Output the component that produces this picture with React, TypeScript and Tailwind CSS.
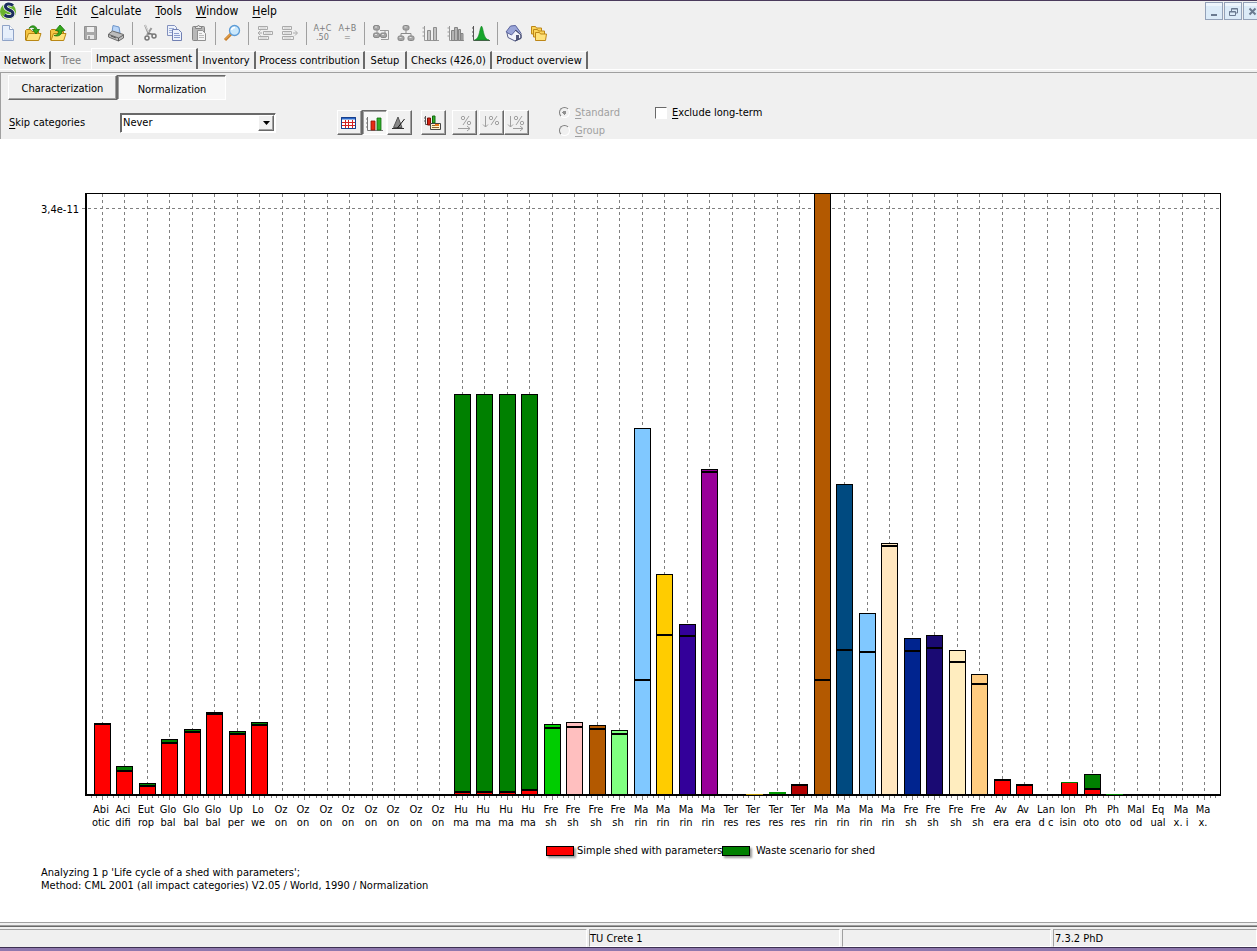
import React from "react";

type Bar = { lines: [string, string]; top?: number; mid?: number; low?: string; high?: string; flat?: string };

const RED = "#ff0000";
const GREEN = "#008000";
const solid = (a: string, b: string, color: string, top: number, mid: number): Bar => ({ lines: [a, b], top, mid, low: color, high: color });
const shed = (a: string, b: string, top: number, mid: number): Bar => ({ lines: [a, b], top, mid, low: RED, high: GREEN });
const empty = (a: string, b: string): Bar => ({ lines: [a, b] });

const BARS: Bar[] = [
  shed("Abi", "otic", 723, 723),
  shed("Aci", "difi", 766, 770),
  shed("Eut", "rop", 783, 785),
  shed("Glo", "bal", 739, 742),
  shed("Glo", "bal", 729, 731),
  shed("Glo", "bal", 712, 713),
  shed("Up", "per", 731, 733),
  shed("Lo", "we", 722, 724),
  ...Array.from({ length: 8 }, () => empty("Oz", "on")),
  shed("Hu", "ma", 394, 791),
  shed("Hu", "ma", 394, 791),
  shed("Hu", "ma", 394, 791),
  shed("Hu", "ma", 394, 789),
  solid("Fre", "sh", "#00cc00", 724, 727),
  solid("Fre", "sh", "#ffbfbf", 722, 726),
  solid("Fre", "sh", "#b35900", 725, 728),
  solid("Fre", "sh", "#80ff80", 730, 733),
  solid("Ma", "rin", "#80c8ff", 428, 679),
  solid("Ma", "rin", "#ffcc00", 574, 634),
  solid("Ma", "rin", "#330099", 624, 635),
  solid("Ma", "rin", "#990099", 469, 471),
  empty("Ter", "res"),
  { lines: ["Ter", "res"], top: 794, flat: "#b38f00" },
  { lines: ["Ter", "res"], top: 792, flat: "#009900" },
  solid("Ter", "res", "#b30000", 784, 784),
  solid("Ma", "rin", "#b35900", 193, 679),
  solid("Ma", "rin", "#004a80", 484, 649),
  solid("Ma", "rin", "#80c8ff", 613, 651),
  solid("Ma", "rin", "#ffe6bf", 543, 545),
  solid("Fre", "sh", "#00248f", 638, 650),
  solid("Fre", "sh", "#1a0a73", 635, 647),
  solid("Fre", "sh", "#ffedbf", 650, 661),
  solid("Fre", "sh", "#ffcc80", 674, 683),
  shed("Av", "era", 779, 779),
  shed("Av", "era", 784, 784),
  empty("Lan", "d c"),
  { lines: ["Ion", "isin"], top: 782, low: RED, flat: GREEN },
  shed("Ph", "oto", 774, 788),
  { lines: ["Ph", "oto"], top: 794, flat: GREEN },
  empty("Mal", "od"),
  empty("Eq", "ual"),
  empty("Ma", "x. i"),
  empty("Ma", "x."),
];

const BASE = 794;
const center = (i: number) => Math.floor(102 + 22.5 * i);

function BarShape({ bar, x }: { bar: Bar; x: number }) {
  if (bar.top === undefined) return null;
  if (bar.flat) {
    return (
      <g>
        {bar.low && <rect x={x} y={bar.top} width="17" height={BASE - bar.top} fill="#000" />}
        {bar.low && <rect x={x + 1} y={bar.top + 1} width="15" height={BASE - bar.top - 1} fill={bar.low} />}
        <rect x={x} y={bar.top} width="17" height={bar.low || bar.top === BASE ? 1 : 2} fill={bar.flat} />
      </g>
    );
  }
  const mid = bar.mid ?? bar.top;
  return (
    <g>
      <rect x={x} y={bar.top} width="17" height={BASE - bar.top} fill="#000" />
      {mid > bar.top + 1 && <rect x={x + 1} y={bar.top + 1} width="15" height={mid - bar.top - 1} fill={bar.high} />}
      <rect x={x + 1} y={mid + 2} width="15" height={BASE - mid - 2} fill={bar.low} />
    </g>
  );
}

function Chart() {
  return (
    <svg viewBox="0 139 1257 696" className="block w-full" role="img" aria-label="Normalization by impact category">
      <g shapeRendering="crispEdges">
        {BARS.map((_, i) => (
          <line key={i} x1={center(i) + 0.5} x2={center(i) + 0.5} y1="194" y2="794" stroke="#808080" strokeDasharray="3 3" />
        ))}
        <line x1="82" x2="1220" y1="208.5" y2="208.5" stroke="#808080" strokeDasharray="3 3" />
        <rect x="85" y="193" width="1136" height="1" />
        <rect x="1220" y="193" width="1" height="603" />
        {BARS.map((bar, i) => (
          <BarShape key={i} bar={bar} x={center(i) - 8} />
        ))}
        <rect x="85" y="193" width="2" height="603" />
        <rect x="85" y="794" width="1136" height="2" />
        {BARS.map((bar, i) =>
          bar.flat && bar.top === BASE ? <rect key={i} x={center(i) - 8} y="794" width="17" height="1" fill={bar.flat} /> : null
        )}
        {BARS.map((_, i) => (
          <g key={i} fill="#808080">
            <rect x={center(i)} y="796" width="1" height="4" />
            {(i === BARS.length - 1 ? [-11, -6, 6, 11] : [-11, -6, 5]).map((d) => (
              <rect key={d} x={center(i) + d} y="796" width="1" height="2" />
            ))}
          </g>
        ))}
      </g>
      <g fontSize="11" textAnchor="middle">
        {BARS.map((bar, i) => (
          <text key={i}>
            <tspan x={center(i) - 1} y="813">{bar.lines[0]}</tspan>
            <tspan x={center(i) - 1} y="826">{bar.lines[1]}</tspan>
          </text>
        ))}
      </g>
      <text x="79" y="213" fontSize="11" textAnchor="end">3,4e-11</text>
    </svg>
  );
}

function Svg({ children }: { children: React.ReactNode }) {
  return <svg width="18" height="18" viewBox="0 0 18 18" fill="none" className="shrink-0">{children}</svg>;
}

const folder = (
  <>
    <path d="M1.500 16V6.500l1-1h4l1.500 2h6.500V16z" fill="#f4c542" stroke="#b07d10" />
    <path d="M2 16.500 4.500 9.500h12.500l-2.300 7z" fill="#ffe27a" stroke="#b98714" />
  </>
);
const node = (x: number, y: number) => (
  <g key={`${x}-${y}`}>
    <rect x={x} y={y} width="6" height="4.500" rx="1.600" fill="#a6a6a6" stroke="#868686" />
    <path d={`M${x + 1.5} ${y + 1.5}h2`} stroke="#e2e2e2" />
  </g>
);

const ICONS: Record<string, React.ReactNode> = {
  New: <><path d="M3.500 1.500h7l4 4v11h-11z" fill="#e6effb" stroke="#8fa3c7" /><path d="M10.500 1.500v4h4" fill="#fff" stroke="#8fa3c7" /><path d="M5 15h8" stroke="#c9d9f2" strokeWidth="2" /></>,
  Open: <>{folder}<path d="M5 4.500c2-4 7-3.500 8 1h2.500L12 10 8.500 5.500H11C10 3 7.500 2.500 5 4.500z" fill="#35a81c" stroke="#167509" strokeWidth=".8" /></>,
  "Save to project": <>{folder}<path d="M5 11.500c4-.5 4.500-2 4.500-5H6.500L11 1l5 5.500h-3c0 4-3 6.500-8 5z" fill="#35a81c" stroke="#167509" strokeWidth=".8" /></>,
  Save: <><path d="M2.500 2.500h12v13h-12z" fill="#a8a8a8" stroke="#909090" /><path d="M5 3h7v5H5z" fill="#efefef" /><path d="M5 11h7v4H5z" fill="#e6e6e6" /><path d="M7 12v3" stroke="#888" strokeWidth="1.500" /></>,
  Print: <><path d="m5 8 1-6.500 6 1.500 1 6z" fill="#b9d5f8" stroke="#6c94c9" /><path d="m1.500 10 4-3 11 3.500v3.500l-5 3-10-4z" fill="#bcbcbc" stroke="#6d6d6d" /><path d="m2 10.500 9.500 3.500 5-3" stroke="#666" /><path d="m11.500 14v3M4 12l5 2" stroke="#555" /></>,
  Cut: <><path d="m5 1 4 10M11.500 4 7 11" stroke="#999" strokeWidth="2" /><path d="m5 1 4 8" stroke="#e2e2e2" /><circle cx="7" cy="14" r="2" stroke="#777" strokeWidth="1.500" /><circle cx="14" cy="12" r="2" stroke="#777" strokeWidth="1.500" /><path d="m8 9 5 1.500" stroke="#777" strokeWidth="1.500" /></>,
  Copy: <><path d="M2.500 1.500h7l2 2v8h-9z" fill="#edf2fc" stroke="#8290bd" /><path d="M4 4.500h5M4 6.500h4M4 8.500h3" stroke="#9eafd8" /><path d="M7.500 5.500h6l3 3v8h-9z" fill="#edf2fc" stroke="#7180b3" /><path d="M9 9.500h5M9 11.500h6M9 13.500h6" stroke="#8b9cce" /></>,
  Paste: <><rect x="2.500" y="2.500" width="12" height="14" rx="1" fill="#b8b8b8" stroke="#858585" /><path d="M5.500 4.500v-2h2L8.500 1l1 1.500h2v2z" fill="#e5e5e5" stroke="#858585" /><path d="M7.500 6.500h5l3 3v7h-8z" fill="#f4f4f4" stroke="#909090" /><path d="M9 9.500h3M9 11.500h5M9 13.500h5" stroke="#bbb" /></>,
  Find: <><path d="m8 10-6 6" stroke="#c67b28" strokeWidth="3" /><path d="m8 9.500-6 6" stroke="#efb45e" /><circle cx="11.500" cy="6.500" r="5" fill="#cae8fc" stroke="#5c9bd6" strokeWidth="1.300" /><path d="M8.500 6c.5-2 2-2.500 3.500-2.500" stroke="#fff" strokeWidth="1.500" /></>,
  Outdent: <><path d="M2.500 2.500h9v3h-9zM7.500 7.500h9v3h-9zM2.500 12.500h10v3h-10zM2 9h4M4.500 6.500 2 9l2.500 2.500" stroke="#aaa" /><path d="M4 4h6M9 9h6M4 14h7" stroke="#ccc" /></>,
  Indent: <><path d="M1.500 2.500h9v3h-9zM1.500 7.500h9v3h-9zM1.500 12.500h11v3h-11zM12 9h4M14 6.500 16.500 9 14 11.500" stroke="#aaa" /><path d="M3 4h6M3 9h6M3 14h7" stroke="#ccc" /></>,
  "Network view": <><path d="M5 5v6h8V7M8 6.500h8.500v9H9" stroke="#999" />{node(1.5, 1.5)}{node(1.5, 9)}{node(8.5, 9)}</>,
  "Tree view": <><path d="M9 6v3M4 12V9.500h10V12" stroke="#8a8a8a" />{node(6, 1.5)}{node(1, 12)}{node(11, 12)}</>,
  Analyze: <><path d="M2.500 2v14.500H17M.5 4h2M.5 8h2M.5 12h2" stroke="#999" /><path d="M5.500 6.500h3v10h-3zM11.500 3.500h3v13h-3z" fill="#c4c4c4" stroke="#8d8d8d" /></>,
  Compare: <><path d="M2.500 2v14.500H17M.5 4h2M.5 8h2M.5 12h2" stroke="#999" /><path d="M4.500 6.500h3v10h-3zM7.500 3.500h3v13h-3zM11.500 5.500h2v11h-2zM14 9.500h2v7h-2z" fill="#b4b4b4" stroke="#858585" /></>,
  Uncertainty: <><path d="M1.500 2v14.500H18M0 4h2M0 8h2M0 12h2" stroke="#555" /><path d="M2.500 16c4-1 4.500-6 6-12l1-2 1 2c1.500 6 2 11 6.500 12z" fill="#16a52b" stroke="#108521" strokeWidth=".6" /></>,
  Home: <><path d="m2 9 7.500-6L16 9v5.500l-6 2.500-7-3.500z" fill="#f2f4fb" stroke="#565d87" /><path d="m1 8 4.500-6 5-.5 5 7-1 1L11 6l-4.500 5z" fill="#9aa5d8" stroke="#5a639c" /><path d="M11 11h3v4.500l-3 1z" fill="#53587b" /><path d="m10 6 6 5v3l-6 3" stroke="#444b6e" /></>,
  Folders: <><path d="M1.500 10V2.500h4l1 1.500h5v6z" fill="#fbd55a" stroke="#bd8617" /><path d="M3.500 13V5.500h4l1 1.500h6v6z" fill="#fbd55a" stroke="#bd8617" /><path d="M5.500 16.500v-8h4l1 1.500h6l-1 6.500z" fill="#ffe27a" stroke="#bd8617" /></>,
};

function Calc({ a, b }: { a: string; b: string }) {
  return (
    <span className="flex flex-col items-center text-[9px] leading-[9px] text-[#7d7d7d]">
      <span>{a}</span>
      <span>{b}</span>
    </span>
  );
}

const TOOL_GROUPS: string[][] = [
  ["New", "Open", "Save to project"],
  ["Save", "Print"],
  ["Cut", "Copy", "Paste"],
  ["Find"],
  ["Outdent", "Indent"],
  ["A+C|.50", "A+B|="],
  ["Network view", "Tree view", "Analyze", "Compare", "Uncertainty"],
  ["Home", "Folders"],
];

const MENUS = ["File", "Edit", "Calculate", "Tools", "Window", "Help"];

const TABS: { name: string; width: string }[] = [
  { name: "Network", width: "w-[51px]" },
  { name: "Tree", width: "w-[40px]" },
  { name: "Impact assessment", width: "w-[107px]" },
  { name: "Inventory", width: "w-[58px]" },
  { name: "Process contribution", width: "w-[109px]" },
  { name: "Setup", width: "w-[42px]" },
  { name: "Checks (426,0)", width: "w-[85px]" },
  { name: "Product overview", width: "w-[96px]" },
];

const RAISED = "border border-t-white border-l-white border-r-[#696969] border-b-[#696969] shadow-[inset_-1px_-1px_0_#a0a0a0]";
const SUNKEN = "border border-t-[#696969] border-l-[#696969] border-r-white border-b-white bg-[#f7f7f7] shadow-[inset_1px_1px_0_#a0a0a0]";

function ViewButton({ label, pressed, children }: { label: string; pressed?: boolean; children: React.ReactNode }) {
  return (
    <button aria-label={label} className={`flex h-[25px] w-[25px] items-center justify-center ${pressed ? SUNKEN + " pt-px pl-px" : RAISED + " pr-px"}`}>
      <Svg>{children}</Svg>
    </button>
  );
}

function Percent({ x }: { x: number }) {
  return (
    <g stroke="#a0a0a0">
      <circle cx={x + 2} cy="4" r="1.700" />
      <circle cx={x + 8} cy="9" r="1.700" />
      <path d={`M${x + 8} 2 ${x + 2} 11`} />
    </g>
  );
}

function Mnemonic({ text }: { text: string }) {
  return <><span className="underline underline-offset-2">{text[0]}</span>{text.slice(1)}</>;
}

export default function App() {
  return (
    <div className="flex min-h-screen flex-col overflow-hidden border-t border-[#4a3b5c] bg-[#f0f0f0] font-['DejaVu_Sans_Condensed','DejaVu_Sans',sans-serif] text-[11px] leading-[13px] text-black">
      <header>
        <div className="flex h-5 items-center overflow-hidden">
          <svg width="18" height="18" viewBox="0 0 18 18" className="shrink-0">
            <circle cx="8" cy="9.500" r="8" fill="#69b32d" />
            <path d="M1 11c3 6 10 7 14-1-1 9-11 10-14 1z" fill="#b6dc62" />
            <path d="M13 3.500C10 1 5.500 1.500 5.500 4.500c0 4 7.500 3 7.500 7 0 3.500-5 4-8.500 1.500" stroke="#fff" strokeWidth="4.500" fill="none" />
            <path d="M13 3.500C10 1 5.500 1.500 5.500 4.500c0 4 7.500 3 7.500 7 0 3.500-5 4-8.500 1.500" stroke="#1b2d5e" strokeWidth="3" fill="none" />
          </svg>
          <nav className="flex gap-[14px] pl-[6px] text-[12px] leading-[14px]">
            {MENUS.map((m) => (
              <button key={m}><Mnemonic text={m} /></button>
            ))}
          </nav>
          <div className="-mr-1 ml-auto flex gap-px">
            {[
              ["Minimize", <path key="p" d="M5 12h6" stroke="#6b7a90" strokeWidth="2" />],
              ["Restore", <path key="p" d="M6.500 8V5.500h6v4.500h-2M4.500 8.500h6v4h-6zM4.500 9h6M6.500 6h6" stroke="#6b7a90" />],
              ["Close", <path key="p" d="m5.500 5.500 6 6m0-6-6 6" stroke="#6b7a90" strokeWidth="2" />],
            ].map(([label, icon]) => (
              <button key={label as string} aria-label={label as string} className="h-[18px] w-[18px] border border-[#93a1b8] bg-[#dcebf8] shadow-[inset_0_3px_0_#edf5fc]">
                <svg width="16" height="16" viewBox="0 0 16 16" fill="none">{icon}</svg>
              </button>
            ))}
          </div>
        </div>

        <div className="flex h-6 items-center">
          {TOOL_GROUPS.map((group, g) => (
            <div key={g} className="flex items-center">
              {g > 0 && <span className="mr-[3px] ml-[4px] h-[23px] w-px bg-[#a0a0a0]" />}
              {group.map((name) => (
                <button key={name} aria-label={name.replace("|", " ")} className={`flex h-6 items-center justify-center ${name === "New" ? "w-5 pr-1" : "w-[25px]"}`}>
                  {name.includes("|") ? <Calc a={name.split("|")[0]} b={name.split("|")[1]} /> : <Svg>{ICONS[name]}</Svg>}
                </button>
              ))}
            </div>
          ))}
        </div>

        <div role="tablist" className="flex h-[25px] items-end border-b border-white">
          {TABS.map((t) => {
            const active = t.name === "Impact assessment";
            return (
              <button
                key={t.name}
                role="tab"
                aria-selected={active}
                disabled={t.name === "Tree"}
                className={`${t.width} shrink-0 border-t border-t-white whitespace-nowrap disabled:text-[#808080] ${
                  active ? "h-[21px] border-l border-l-white pb-[2px]" : "h-[18px]"
                } ${t.name === "Tree" ? "" : "border-r-2 border-r-[#696969]"}`}
              >
                {t.name}
              </button>
            );
          })}
        </div>
      </header>

      <section className="mt-[2px] border-t border-l border-[#a0a0a0]">
        <div className="flex pt-[2px] pl-[7px]">
          <button className={`h-[25px] w-[109px] pt-px ${RAISED}`}>Characterization</button>
          <button className={`h-[25px] w-[109px] pt-[3px] pl-px ${SUNKEN}`}>Normalization</button>
        </div>
        <div className="flex h-[39px] items-center pt-[6px]">
          <label htmlFor="skip" className="w-[119px] pl-2"><Mnemonic text="Skip categories" /></label>
          <div className="relative">
            <select id="skip" className="block h-[20px] w-[156px] appearance-none border border-t-[#696969] border-r-white border-b-white border-l-[#696969] bg-white pl-[2px] shadow-[inset_1px_1px_0_#696969]">
              <option>Never</option>
            </select>
            <span className={`pointer-events-none absolute top-[2px] right-[2px] flex h-4 w-4 items-center justify-center bg-[#f0f0f0] ${RAISED}`}>
              <svg width="7" height="4" viewBox="0 0 7 4"><path d="M0 0h7L3.500 4z" /></svg>
            </span>
          </div>
          <div className="ml-[61px] flex">
            <ViewButton label="Table">
              <path d="M1.500 3.500h14v11h-14z" fill="#fff" stroke="#173f8c" />
              <path d="M2 4.500h13" stroke="#2c68c8" strokeWidth="2" />
              <path d="M2 8.500h13M2 11.500h13M5.500 6v8M8.500 6v8M12.500 6v8" stroke="#d32222" />
              <path d="M1.500 3.500h14v11h-14z" stroke="#173f8c" />
            </ViewButton>
            <ViewButton label="Graph" pressed>
              <path d="M1.500 3v13.500H17M0 5h2M0 9h2M0 13h2" stroke="#777" />
              <path d="M5 7h4v9H5z" fill="#e62c14" stroke="#8e1405" strokeWidth=".8" /><path d="M11 4h4v12h-4z" fill="#2fb02a" stroke="#12690f" strokeWidth=".8" />
            </ViewButton>
            <ViewButton label="Uncertainty">
              <path d="m8 3-4.500 10.500h8.500z" fill="#888" stroke="#555" /><path d="m14.500 5-7 9" stroke="#111" /><path d="M2 14.500h12" stroke="#333" />
            </ViewButton>
          </div>
          <div className="ml-[9px] flex">
            <ViewButton label="Graph options">
              <path d="M1.500 2v8.500h5M0 4h2M0 7h2" stroke="#555" />
              <path d="M3.500 4h3v7h-3z" fill="#d32211" stroke="#7d0d05" /><path d="M8.500 2h2.500v7H8.500z" fill="#2fb02a" stroke="#12690f" />
              <path d="M6.500 9.500h10v6h-10z" fill="#fff4cf" stroke="#444" /><path d="M8 11.500h3M8 13.500h7" stroke="#8a6434" /><path d="M11 11h4" stroke="#e87717" strokeWidth="2" />
            </ViewButton>
          </div>
          <div className="ml-[6px] flex">
            <ViewButton label="Percent"><Percent x={6} /><path d="M3 14.500h12m-3-2.500 3 2.500-3 2.500" stroke="#a0a0a0" /></ViewButton>
            <span className="w-[2px]" />
            <ViewButton label="Scale percent"><Percent x={7} /><path d="M3.500 2v11M1 10.500 3.500 13 6 10.500" stroke="#a0a0a0" /></ViewButton>
            <ViewButton label="Scale all"><Percent x={7} /><path d="M3.500 2v11M1 10.500 3.500 13 6 10.500M6 14.500h10m-3-2.500 3 2.500-3 2.500" stroke="#a0a0a0" /></ViewButton>
          </div>
          <div className="ml-[30px] flex w-[96px] flex-col gap-[5px] self-start text-[#a0a0a0]">
            {["Standard", "Group"].map((r) => (
              <label key={r} className="flex items-center gap-[5px]">
                <input
                  type="radio"
                  name="mode"
                  disabled
                  defaultChecked={r === "Standard"}
                  className="h-[11px] w-[11px] appearance-none rounded-full border border-t-[#808080] border-r-white border-b-white border-l-[#808080] bg-[#f0f0f0] checked:bg-[radial-gradient(circle,#909090_0_2px,transparent_2px)]"
                />
                <span><Mnemonic text={r} /></span>
              </label>
            ))}
          </div>
          <label className="flex items-center gap-[5px] self-start">
            <input type="checkbox" className="h-3 w-3 appearance-none border border-t-[#696969] border-r-white border-b-white border-l-[#696969] bg-white" />
            <span><Mnemonic text="Exclude long-term" /></span>
          </label>
        </div>
      </section>

      <main className="flex-1 bg-white">
        <Chart />
        <div className="flex items-center pt-[9px] pl-[546px]">
          <span className="h-[10px] w-7 border border-black bg-[#ff0000] shadow-[2px_2px_2px_#999]" />
          <span className="w-[148px] pl-[3px] whitespace-nowrap">Simple shed with parameters</span>
          <span className="h-[10px] w-7 border border-black bg-[#008000] shadow-[2px_2px_2px_#999]" />
          <span className="pl-[6px] whitespace-nowrap">Waste scenario for shed</span>
        </div>
        <p className="pt-[9px] pl-[41px]">
          Analyzing 1 p &#39;Life cycle of a shed with parameters&#39;;
          <br />
          Method: CML 2001 (all impact categories) V2.05 / World, 1990 / Normalization
        </p>
      </main>

      <footer className="border-t border-[#a0a0a0]">
        <div className="mt-[2px] h-[2px] border-t border-[#a0a0a0] bg-[#696969]" />
        <div className="mt-[2px] flex h-[18px] gap-[2px]">
          <div className="w-[587px] border-t border-r border-t-[#a0a0a0] border-r-white" />
          <div className="w-[251px] border border-t-[#a0a0a0] border-r-white border-b-white border-l-[#a0a0a0] pt-[2px]">TU Crete 1</div>
          <div className="w-[209px] border border-t-[#a0a0a0] border-r-white border-b-white border-l-[#a0a0a0]" />
          <div className="flex-1 border border-t-[#a0a0a0] border-r-white border-b-white border-l-[#a0a0a0] pt-[2px] pl-px">7.3.2 PhD</div>
        </div>
        <div className="h-1 border-t border-[#3d3152] bg-[#8f78ae]" />
      </footer>
    </div>
  );
}
